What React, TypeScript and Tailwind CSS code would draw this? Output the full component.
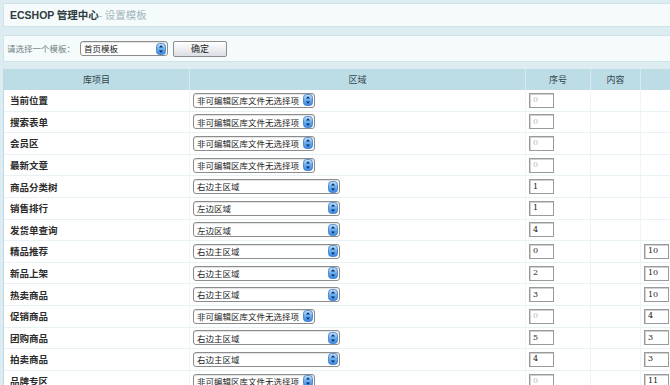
import React from 'react'

const CJK = { fontFamily: '"Noto Sans CJK SC", "Noto Sans", sans-serif' }

type Row = {
  name: string
  region: string | null
  order: string
  qty?: string
}

const NOEDIT = '非可编辑区库文件无选择项'

const ROWS: Row[] = [
  { name: '当前位置', region: null, order: '0' },
  { name: '搜索表单', region: null, order: '0' },
  { name: '会员区', region: null, order: '0' },
  { name: '最新文章', region: null, order: '0' },
  { name: '商品分类树', region: '右边主区域', order: '1' },
  { name: '销售排行', region: '左边区域', order: '1' },
  { name: '发货单查询', region: '左边区域', order: '4' },
  { name: '精品推荐', region: '右边主区域', order: '0', qty: '10' },
  { name: '新品上架', region: '右边主区域', order: '2', qty: '10' },
  { name: '热卖商品', region: '右边主区域', order: '3', qty: '10' },
  { name: '促销商品', region: null, order: '0', qty: '4' },
  { name: '团购商品', region: '右边主区域', order: '5', qty: '3' },
  { name: '拍卖商品', region: '右边主区域', order: '4', qty: '3' },
  { name: '品牌专区', region: null, order: '0', qty: '11' },
]

function Spinner() {
  return (
    <svg width="10" height="12" viewBox="0 0 10 12" className="shrink-0">
      <defs>
        <linearGradient id="spin" x1="0" y1="0" x2="0" y2="1">
          <stop offset="0" stopColor="#c4e2fc" />
          <stop offset="0.5" stopColor="#68adf0" />
          <stop offset="1" stopColor="#3b8ae0" />
        </linearGradient>
      </defs>
      <rect x="0.5" y="0.5" width="9" height="11" rx="3" fill="url(#spin)" stroke="#3b78c4" strokeWidth="0.8" />
      <path d="M5 2.2 L7 4.6 L3 4.6 Z" fill="#0d2a55" />
      <path d="M5 9.8 L7 7.4 L3 7.4 Z" fill="#0d2a55" />
    </svg>
  )
}

function Select({ text, width }: { text: string; width: string }) {
  return (
    <div
      className={`flex h-[15px] items-center justify-between overflow-hidden rounded-[3px] border border-[#8c8c8c] bg-white pl-[3px] pr-[1px] shadow-[inset_0_1px_1px_rgba(0,0,0,0.12)] ${width}`}
    >
      <span className="whitespace-nowrap text-[8.5px] leading-none text-[#222]" style={CJK}>
        {text}
      </span>
      <Spinner />
    </div>
  )
}

function NumInput({ value, disabled }: { value: string; disabled?: boolean }) {
  return (
    <div
      className={`flex h-[15px] w-[25px] items-center border border-[#9a9a9a] bg-white pl-[3px] font-['DejaVu_Serif',serif] text-[8px] leading-none shadow-[inset_1px_1px_0_#d0d0d0] ${
        disabled ? 'text-[#b5b5b5]' : 'text-[#222]'
      }`}
    >
      {value}
    </div>
  )
}

export default function App() {
  return (
    <div className="h-[385px] w-[670px] overflow-hidden bg-[#dcecf1] pl-[3px] pt-[3px]">
      <div className="w-[720px]">
        <div className="flex h-[24px] items-center border border-[#cfe3ea] bg-[#f5fafb] pl-[6px]" style={CJK}>
          <span className="text-[10.5px] font-bold text-[#2d3b40]">
            <span className="font-['Liberation_Sans',sans-serif]">ECSHOP</span> 管理中心
          </span>
          <span className="text-[10.5px] text-[#9fb4ba]">- 设置模板</span>
        </div>

        <div className="mt-[8px] flex h-[27px] items-center gap-[5px] border border-[#cfe3ea] bg-[#f5fafb] pl-[3px]">
          <span className="whitespace-nowrap text-[8.5px] text-[#6f7f84]" style={CJK}>
            请选择一个模板：
          </span>
          <Select text="首页模板" width="w-[88px]" />
          <button
            className="flex h-[16px] w-[54px] items-center justify-center rounded-[2px] border border-[#8d8d8d] bg-gradient-to-b from-white to-[#dcdfe3] text-[9px] text-[#222]"
            style={CJK}
          >
            确定
          </button>
        </div>

        <div className="mt-[7px] border-l border-[#bcdbe4] bg-white" style={CJK}>
          <div className="grid h-[21px] grid-cols-[186px_336px_65px_50px_83px] bg-[#bcdde6] text-[9px] text-[#34464c]">
            <div className="flex items-center justify-center border-r border-[#d6eaf0]">库项目</div>
            <div className="flex items-center justify-center border-r border-[#d6eaf0]">区域</div>
            <div className="flex items-center justify-center border-r border-[#d6eaf0]">序号</div>
            <div className="flex items-center justify-center border-r border-[#d6eaf0]">内容</div>
            <div className="flex items-center justify-center">数量</div>
          </div>
          {ROWS.map((r) => (
            <div
              key={r.name}
              className="grid h-[21.6px] grid-cols-[186px_336px_65px_50px_83px] border-b border-[#e8f2f5]"
            >
              <div className="flex items-center border-r border-[#eef5f7] pl-[6px] text-[9.5px] font-bold text-[#2b2b2b]">
                {r.name}
              </div>
              <div className="flex items-center border-r border-[#eef5f7] pl-[3px]">
                {r.region ? (
                  <Select text={r.region} width="w-[147px]" />
                ) : (
                  <Select text={NOEDIT} width="w-[122px]" />
                )}
              </div>
              <div className="flex items-center border-r border-[#eef5f7] pl-[3px]">
                <NumInput value={r.order} disabled={!r.region} />
              </div>
              <div className="border-r border-[#eef5f7]" />
              <div className="flex items-center pl-[3px]">{r.qty && <NumInput value={r.qty} />}</div>
            </div>
          ))}
        </div>
      </div>
    </div>
  )
}
